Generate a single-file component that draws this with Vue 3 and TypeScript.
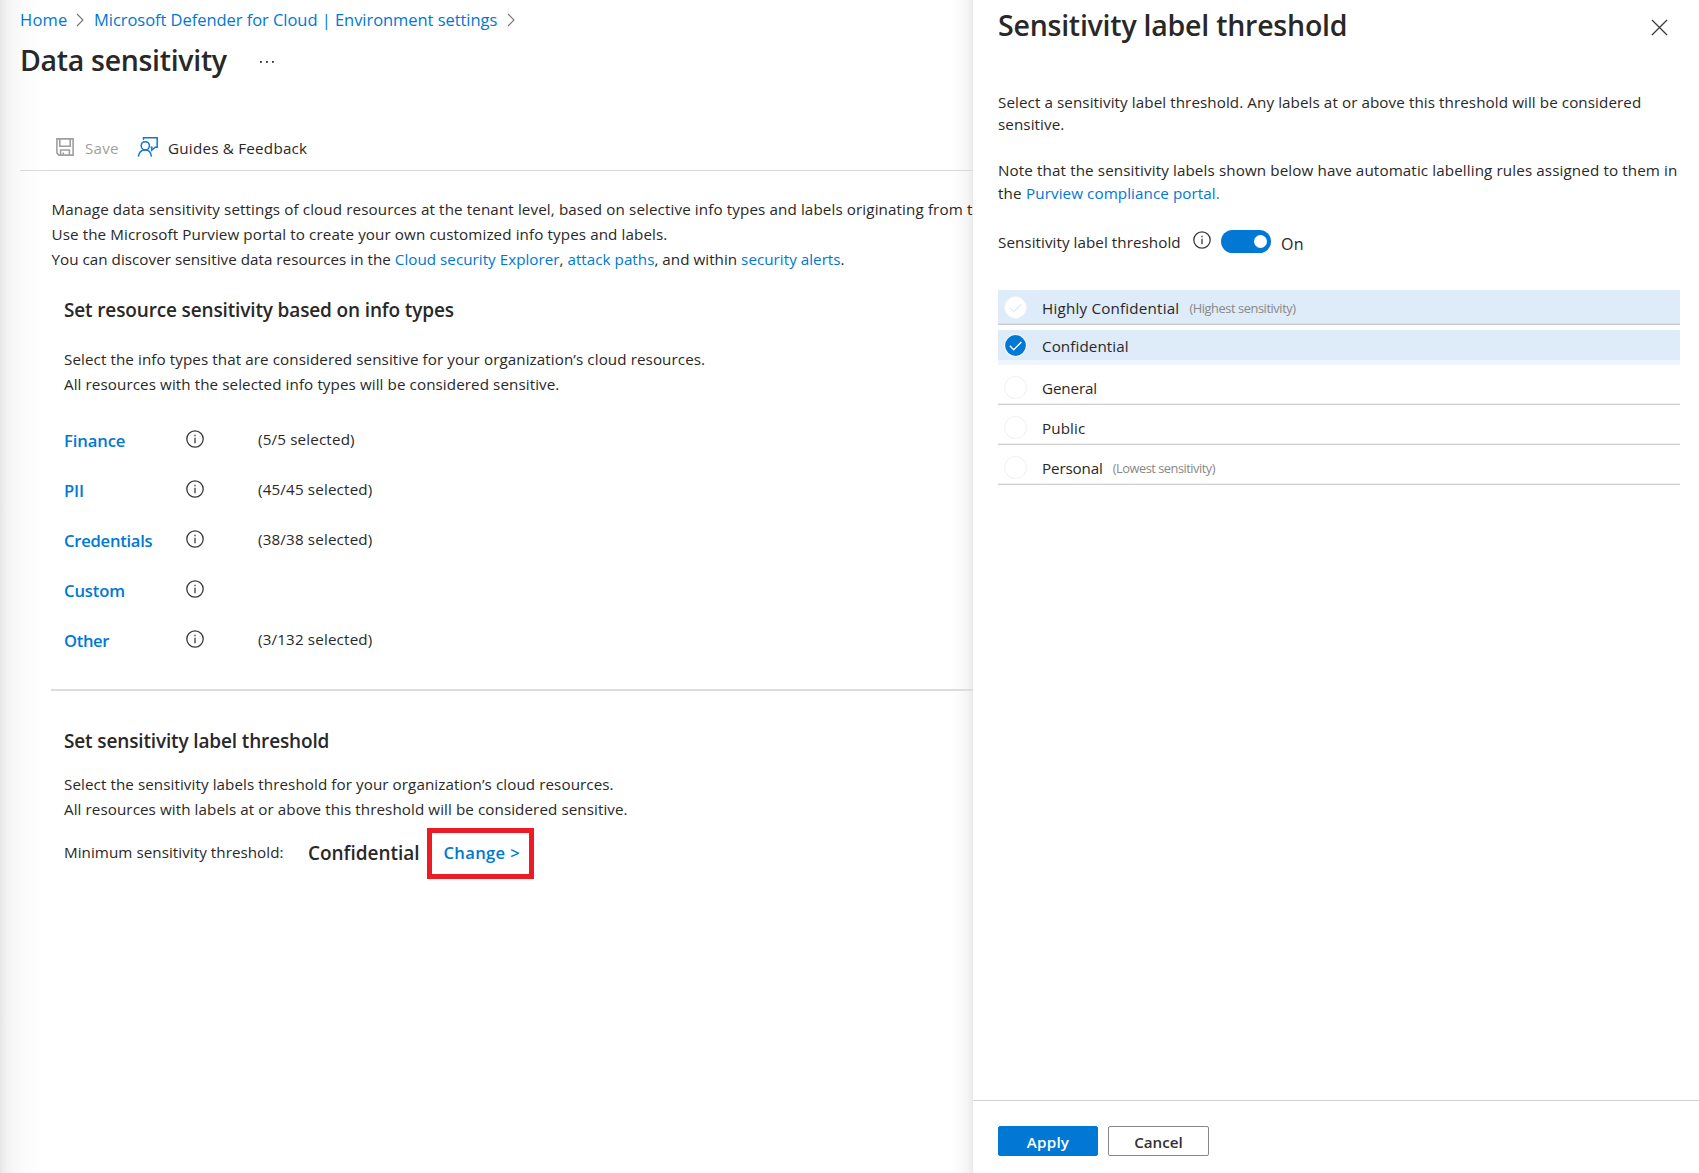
<script setup lang="ts">
interface InfoType {
  name: string
  count: string
  cls: string
}

interface SensitivityLabel {
  name: string
  note?: string
  state: 'included' | 'selected' | 'none'
  cls: string
}

const infoTypes: InfoType[] = [
  { name: 'Finance', count: '(5/5 selected)', cls: 'finance' },
  { name: 'PII', count: '(45/45 selected)', cls: 'pii' },
  { name: 'Credentials', count: '(38/38 selected)', cls: 'credentials' },
  { name: 'Custom', count: '', cls: 'custom' },
  { name: 'Other', count: '(3/132 selected)', cls: 'other' },
]

const labels: SensitivityLabel[] = [
  { name: 'Highly Confidential', note: '(Highest sensitivity)', state: 'included', cls: 'highly' },
  { name: 'Confidential', state: 'selected', cls: 'confidential' },
  { name: 'General', state: 'none', cls: 'general' },
  { name: 'Public', state: 'none', cls: 'public' },
  { name: 'Personal', note: '(Lowest sensitivity)', state: 'none', cls: 'personal' },
]
</script>

<template>
  <div class="page">
    <main class="blade">
      <nav class="crumbs">
        <a class="home">Home</a>
        <svg class="chev" width="8" height="14" viewBox="0 0 8 14"><path d="M1 1l6 6-6 6" /></svg>
        <a class="env">Microsoft Defender for Cloud | Environment settings</a>
        <svg class="chev" width="8" height="14" viewBox="0 0 8 14"><path d="M1 1l6 6-6 6" /></svg>
      </nav>

      <div class="title-row">
        <h1>Data sensitivity</h1>
        <svg class="dots" width="16" height="4" viewBox="0 0 16 4">
          <rect x="1" y="1" width="1.8" height="1.8" /><rect x="7" y="1" width="1.8" height="1.8" /><rect x="13" y="1" width="1.8" height="1.8" />
        </svg>
      </div>

      <div class="toolbar">
        <svg class="save-icon" width="20" height="20" viewBox="0 0 20 20">
          <path d="M1.900 1.900h16.200v16.200H4L1.900 16z M4.800 2v7.200h10.400V2 M5.600 18v-5h8.800v5 M8.300 18v-2.400" />
        </svg>
        <span class="save">Save</span>
        <svg class="guide-icon" width="22" height="22" viewBox="0 0 22 22">
          <path d="M6.500 3.800V1.800h13.700v9.400h-2l-3.400 3v-3h-1.200" />
          <circle cx="8.300" cy="9.800" r="4.100" />
          <path d="M1.400 20.600c.5-4 3.200-6.600 6.900-6.600 3.400 0 5.700 2.600 6.200 6.600" />
        </svg>
        <span class="guides">Guides &amp; Feedback</span>
      </div>

      <div class="content">
        <p class="intro">
          <span class="wide">Manage data sensitivity settings of cloud resources at the tenant level, based on selective info types and labels originating from t</span><br />
          <span class="mid">Use the Microsoft Purview portal to create your own customized info types and labels.</span><br />
          <span class="tight">You can discover sensitive data resources in the <a>Cloud security Explorer</a>, <a>attack paths</a>, and within <a>security alerts</a>.</span>
        </p>

        <section class="types">
          <h2>Set resource sensitivity based on info types</h2>
          <p class="desc">
            Select the info types that are considered sensitive for your organization’s cloud resources.<br />
            All resources with the selected info types will be considered sensitive.
          </p>
          <div class="rows">
            <div v-for="t in infoTypes" :key="t.name" class="row">
              <a class="type-name" :class="t.cls">{{ t.name }}</a>
              <svg class="info" width="20" height="20" viewBox="0 0 20 20">
                <circle cx="10" cy="10" r="8.2" /><path d="M10 8.700v5.500" /><path d="M10 5.700v1.600" />
              </svg>
              <span class="count">{{ t.count }}</span>
            </div>
          </div>
        </section>

        <section class="threshold">
          <h2>Set sensitivity label threshold</h2>
          <p class="desc">
            Select the sensitivity labels threshold for your organization’s cloud resources.<br />
            All resources with labels at or above this threshold will be considered sensitive.
          </p>
          <div class="minimum">
            <span class="min-label">Minimum sensitivity threshold:</span>
            <strong>Confidential</strong>
            <a class="change">Change &gt;</a>
          </div>
        </section>
      </div>
    </main>

    <aside class="panel">
      <header>
        <h1>Sensitivity label threshold</h1>
        <svg width="17" height="17" viewBox="0 0 17 17"><path d="M1 1l15 15M16 1L1 16" /></svg>
      </header>
      <p class="lead">
        Select a sensitivity label threshold. Any labels at or above this threshold will be considered<br />
        sensitive.
      </p>
      <p class="note">
        <span>Note that the sensitivity labels shown below have automatic labelling rules assigned to them in</span><br />
        the <a>Purview compliance portal.</a>
      </p>

      <div class="switch-row">
        <span>Sensitivity label threshold</span>
        <svg class="info" width="20" height="20" viewBox="0 0 20 20">
          <circle cx="10" cy="10" r="8.2" /><path d="M10 8.700v5.500" /><path d="M10 5.700v1.600" />
        </svg>
        <span class="switch"><i></i></span>
        <span class="on">On</span>
      </div>

      <ul>
        <li v-for="l in labels" :key="l.name" :class="[l.state, l.cls]">
          <svg width="23" height="23" viewBox="0 0 23 23">
            <circle cx="11.5" cy="11.5" r="11" />
            <path v-if="l.state !== 'none'" d="M5.800 11.800l3.900 4L17.400 8" />
          </svg>
          <span class="name">{{ l.name }}</span>
          <span v-if="l.note" class="hint">{{ l.note }}</span>
        </li>
      </ul>

      <footer>
        <button class="apply">Apply</button>
        <button class="cancel">Cancel</button>
      </footer>
    </aside>
  </div>
</template>

<style>
body {
  margin: 0;
  overflow: hidden;
}
</style>

<style scoped>
* {
  box-sizing: border-box;
}
.page {
  display: flex;
  width: 1699px;
  height: 1173px;
  overflow: hidden;
  background: #fff;
  font: 15.2px/25px 'Open Sans', 'Noto Sans', sans-serif;
  letter-spacing: 0.085px;
  color: #292827;
}
h1,
h2,
p,
ul {
  margin: 0;
  padding: 0;
  font-weight: 400;
}
a {
  color: #0078d4;
  text-decoration: none;
}
svg {
  display: block;
  flex: none;
  fill: none;
}

.blade {
  width: 973px;
  flex: none;
  overflow: hidden;
  white-space: nowrap;
  background:
    linear-gradient(to right, #e6e6e6 0, #f1f1f1 6px, #f8f8f8 14px, #fcfcfc 26px, rgba(255, 255, 255, 0) 42px) left / 42px 100% no-repeat,
    linear-gradient(to left, #e9e9e9 0, #f4f4f4 5px, #fafafa 12px, rgba(255, 255, 255, 0) 22px) right / 22px 100% no-repeat;
}
.crumbs {
  display: flex;
  align-items: center;
  height: 40px;
  padding: 0 0 2px 20px;
  font-size: 16.5px;
}
.home {
  width: 56px;
  letter-spacing: 0.25px;
}
.chev {
  margin-top: 1px;
  stroke: #767574;
  stroke-width: 1.1;
}
.env {
  width: 413px;
  margin-left: 10px;
  letter-spacing: -0.05px;
}
.title-row {
  display: flex;
  align-items: center;
  height: 40px;
  padding-left: 20px;
}
.title-row h1,
header h1 {
  font-size: 28.5px;
  font-weight: 600;
  line-height: 40px;
  letter-spacing: -0.31px;
}
.title-row h1 {
  width: 239px;
}
.dots {
  margin-top: 4px;
  fill: #323130;
}
.toolbar {
  display: flex;
  align-items: center;
  height: 46px;
  margin: 45px 0 0 20px;
  padding: 0 0 1px 35px;
  border-bottom: 1px solid #d9d9d9;
}
.save-icon {
  stroke: #a19f9d;
  stroke-width: 1.6;
}
.save {
  width: 52px;
  margin: 3px 0 0 10px;
  letter-spacing: 0.25px;
  color: #a19f9d;
}
.guide-icon {
  stroke: #0f76d2;
  stroke-width: 1.5;
}
.guides {
  margin: 3px 0 0 9px;
  letter-spacing: 0.23px;
}
.content {
  padding: 26px 0 0 51px;
}
.intro {
  padding-left: 0.5px;
}
.wide {
  letter-spacing: 0.112px;
}
.mid {
  letter-spacing: 0.1px;
}
.tight {
  letter-spacing: 0.03px;
}
h2 {
  font-size: 19px;
  font-weight: 600;
  line-height: 26px;
  letter-spacing: -0.14px;
}
.types {
  height: 419px;
  padding: 25px 0 0 13px;
  border-bottom: 2px solid #dcdcdc;
}
.desc {
  margin-top: 24px;
}
.rows {
  margin-top: 29px;
}
.row {
  display: flex;
  height: 50px;
}
.type-name {
  width: 121px;
  padding-top: 2px;
  font-size: 16.6px;
  font-weight: 600;
  letter-spacing: -0.1px;
}
.credentials {
  letter-spacing: -0.25px;
}
.custom {
  letter-spacing: -0.13px;
}
.other {
  letter-spacing: -0.35px;
}
.info {
  stroke: #3b3a39;
  stroke-width: 1.3;
}
.row .info {
  margin-top: 2.5px;
}
.count {
  margin: 1px 0 0 53px;
  letter-spacing: 0.16px;
}
.threshold {
  padding: 37px 0 0 13px;
}
.threshold .desc {
  margin-top: 18px;
  letter-spacing: 0.078px;
}
.minimum {
  display: flex;
  align-items: center;
  height: 51px;
  margin-top: 6px;
}
.min-label {
  width: 244px;
  padding-bottom: 2px;
  letter-spacing: 0.05px;
}
.minimum strong {
  width: 119px;
  font-size: 19px;
  font-weight: 600;
  letter-spacing: -0.03px;
}
.change {
  width: 107px;
  height: 51px;
  padding-left: 11.5px;
  border: 5px solid #ed1c24;
  font-size: 16.6px;
  font-weight: 600;
  line-height: 40px;
  letter-spacing: 0.34px;
}

.panel {
  display: flex;
  flex-direction: column;
  flex: 1;
  height: 1173px;
  padding-left: 25px;
  background: #fff;
  line-height: 22.5px;
  white-space: nowrap;
}
header {
  display: flex;
  justify-content: space-between;
  height: 91px;
  padding: 5px 31px 0 0;
}
header h1 {
  letter-spacing: -0.23px;
}
header svg {
  margin-top: 14px;
  stroke: #3b3a39;
  stroke-width: 1.25;
}
.lead {
  line-height: 22px;
}
.note {
  margin-top: 24px;
}
.note span {
  letter-spacing: 0.115px;
}
.note a {
  margin-left: 0.5px;
}
.switch-row {
  display: flex;
  height: 25px;
  margin-top: 25px;
}
.switch-row .info {
  margin: 0.5px 0 0 11px;
}
.switch-row > span:first-child {
  width: 183px;
  margin-top: 2px;
  letter-spacing: 0.06px;
}
.switch {
  width: 50px;
  height: 23px;
  margin: 1px 0 0 9px;
  padding: 5px 4px 5px 33px;
  border-radius: 12px;
  background: #0078d4;
}
.switch i {
  display: block;
  width: 13px;
  height: 13px;
  border-radius: 50%;
  background: #fff;
}
.on {
  margin: 3.5px 0 0 10px;
  font-size: 16px;
  letter-spacing: 0.4px;
}
ul {
  width: 682px;
  margin-top: 36px;
  list-style: none;
}
li {
  display: flex;
  height: 35px;
  margin-bottom: 5px;
  padding-left: 6px;
  border-bottom: 1px solid #d0d0d0;
  box-shadow: inset 0 -1px #f0f0f0;
}
li svg {
  margin-top: 6px;
}
li circle {
  fill: #fff;
  stroke: #f0f0f0;
}
li.included {
  background: #deebf8;
  border-color: #c8ccd2;
  box-shadow: inset 0 -1px #d6dfe8;
}
li.included path {
  stroke: #e3eef9;
  stroke-width: 1.3;
}
li.selected {
  border-bottom: 5px solid #eef5fc;
  background: #deebf8;
  box-shadow: none;
}
li.selected svg {
  margin-top: 3.5px;
}
li.selected circle {
  fill: #0078d4;
  stroke: #f3f8fd;
  stroke-width: 1.2;
}
li.selected path {
  stroke: #fff;
  stroke-width: 1.3;
}
.name {
  margin: 6.5px 0 0 15px;
}
.selected .name {
  margin-top: 4.5px;
}
.highly .name {
  letter-spacing: 0.2px;
}
.general .name,
.personal .name {
  letter-spacing: -0.13px;
}
.public .name {
  letter-spacing: 0.1px;
}
.hint {
  margin: 7px 0 0 10px;
  font-size: 12.8px;
  letter-spacing: -0.42px;
  color: #8a8886;
}
.personal .hint {
  letter-spacing: -0.48px;
}
footer {
  display: flex;
  gap: 10px;
  height: 73px;
  margin: auto 0 0 -25px;
  padding: 25px 0 0 25px;
  border-top: 1px solid #d2d2d2;
}
button {
  width: 100px;
  height: 30px;
  padding: 1px 0 0;
  border: 1px solid #0078d4;
  border-radius: 2px;
  background: #0078d4;
  font: 600 15.2px/22px 'Open Sans', 'Noto Sans', sans-serif;
  color: #fff;
}
.apply {
  letter-spacing: 0.2px;
}
.cancel {
  width: 101px;
  border-color: #8a8886;
  background: #fff;
  color: #323130;
}
</style>
